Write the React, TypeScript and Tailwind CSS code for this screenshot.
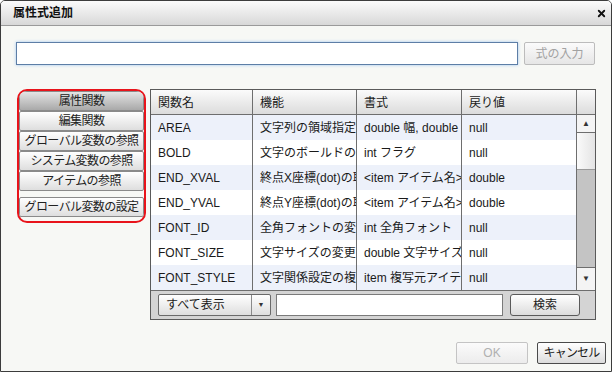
import { X } from "lucide-react";

const rows: [string, string, string, string][] = [
    ["AREA", "文字列の領域指定設定", "double 幅, double 高さ", "null"],
    ["BOLD", "文字のボールドの変更", "int フラグ", "null"],
    ["END_XVAL", "終点X座標(dot)の取得", "<item アイテム名>", "double"],
    ["END_YVAL", "終点Y座標(dot)の取得", "<item アイテム名>", "double"],
    ["FONT_ID", "全角フォントの変更", "int 全角フォント", "null"],
    ["FONT_SIZE", "文字サイズの変更", "double 文字サイズ", "null"],
    ["FONT_STYLE", "文字関係設定の複写", "item 複写元アイテム", "null"],
];

const sideButtons = ["編集関数", "グローバル変数の参照", "システム変数の参照", "アイテムの参照"];

const cellCls = "h-[25px] shrink-0 flex items-center pl-[7px] overflow-hidden whitespace-nowrap border-r border-[#6e6e6e]";
const colW = ["w-[102px]", "w-[104px]", "w-[105px]", "w-[115px]"];

const SideButton = ({ label, header }: { label: string; header?: boolean }) => (
    <div
        className={`h-[20px] flex items-center justify-center border border-[#8a8a8a] rounded-[2px] text-[12px] tracking-[-0.6px] text-[#222] whitespace-nowrap ${
            header ? "bg-gradient-to-b from-[#e4e4e4] to-[#a9a9a9]" : "bg-gradient-to-b from-[#ffffff] to-[#dedede]"
        }`}
    >
        {label}
    </div>
);

export default function App() {
    return (
        <div className="w-[612px] h-[372px] flex flex-col border border-[#3c3c3c] rounded-t-[5px] bg-[#f7f8f5] overflow-hidden font-['Liberation_Sans','Noto_Sans_CJK_JP',sans-serif] text-[#1a1a1a]">
            {/* title bar */}
            <div className="h-[25px] shrink-0 flex items-center justify-between pl-[12px] pr-[4px] bg-gradient-to-b from-[#fbfbfb] to-[#d8d8d8] border-b border-[#9a9a9a]">
                <span className="text-[12px] font-bold text-[#111]">属性式追加</span>
                <X size={11} strokeWidth={4} className="text-[#111]" />
            </div>

            <div className="flex-1 flex flex-col px-[15px] pt-[16px]">
                {/* formula input */}
                <div className="flex items-center gap-[6px]">
                    <div className="w-[502px] h-[23px] bg-white border border-[#5d7ea6] shadow-[0_0_3px_#9fc4ee]" />
                    <div className="w-[71px] h-[23px] flex items-center justify-center border border-[#bcbcbc] rounded-[2px] bg-gradient-to-b from-[#fbfbfb] to-[#e6e6e6] text-[12px] text-[#a2a2a2]">
                        式の入力
                    </div>
                </div>

                <div className="flex items-start gap-[4px] mt-[24px] pl-[1px]">
                    {/* left side menu */}
                    <div className="w-[130px] border-2 border-[#e8141b] rounded-[10px] overflow-hidden flex flex-col pb-[4px]">
                        <SideButton label="属性関数" header />
                        {sideButtons.map(b => <SideButton key={b} label={b} />)}
                        <div className="mt-[6px]">
                            <SideButton label="グローバル変数の設定" />
                        </div>
                    </div>

                    {/* function table */}
                    <div className="w-[446px] border border-[#5a5a5a] bg-[#d4d4d4]">
                        <div className="flex bg-white text-[12px]">
                            <div className="flex flex-col">
                                <div className="flex h-[25px] bg-gradient-to-b from-[#fbfbfb] to-[#dcdcdc] border-b border-[#6e6e6e]">
                                    {["関数名", "機能", "書式", "戻り値"].map((h, i) => (
                                        <div key={h} className={`${cellCls} ${colW[i]} h-[24px]`}>{h}</div>
                                    ))}
                                </div>
                                {rows.map((r, ri) => (
                                    <div key={r[0]} className={`flex ${ri % 2 === 0 ? "bg-[#edf1fa]" : "bg-white"}`}>
                                        {r.map((c, i) => (
                                            <div key={i} className={`${cellCls} ${colW[i]}`}>{c}</div>
                                        ))}
                                    </div>
                                ))}
                            </div>
                            {/* scrollbar */}
                            <div className="w-[18px] flex flex-col">
                                <div className="h-[25px] bg-gradient-to-b from-[#fbfbfb] to-[#dcdcdc] border-b border-[#6e6e6e]" />
                                <div className="h-[18px] flex items-center justify-center border-b border-[#6e6e6e] bg-[#f4f4f4] text-[8px] text-[#333]">▲</div>
                                <div className="h-[37px] bg-gradient-to-r from-[#fafafa] to-[#e4e4e4] border-b border-[#9a9a9a]" />
                                <div className="flex-1 bg-[#c4c4c4]" />
                                <div className="h-[23px] flex items-center justify-center border-t border-[#6e6e6e] bg-[#f4f4f4] text-[8px] text-[#333]">▼</div>
                            </div>
                        </div>

                        {/* toolbar */}
                        <div className="h-[29px] flex items-center border-t border-[#6e6e6e] pl-[7px] gap-[5px] text-[12px]">
                            <div className="w-[113px] h-[22px] flex border border-[#6a6a6a] rounded-[2px] bg-gradient-to-b from-[#ffffff] to-[#dedede]">
                                <div className="flex-1 flex items-center pl-[7px]">すべて表示</div>
                                <div className="w-[19px] flex items-center justify-center border-l border-[#8a8a8a] text-[7px] text-[#333]">▼</div>
                            </div>
                            <div className="w-[227px] h-[22px] bg-white border border-[#7a7a7a]" />
                            <div className="ml-[2px] w-[70px] h-[22px] flex items-center justify-center border border-[#5a5a5a] rounded-[3px] bg-gradient-to-b from-[#ffffff] to-[#dcdcdc]">
                                検索
                            </div>
                        </div>
                    </div>
                </div>

                {/* footer */}
                <div className="flex justify-end gap-[9px] mt-[22px] mr-[-10px]">
                    <div className="w-[72px] h-[22px] flex items-center justify-center border border-[#c4c4c4] rounded-[2px] bg-gradient-to-b from-[#fbfbfb] to-[#ececec] text-[12px] text-[#b0b0b0]">
                        OK
                    </div>
                    <div className="w-[69px] h-[22px] flex items-center justify-center border border-[#4a4a4a] rounded-[2px] bg-gradient-to-b from-[#ffffff] to-[#dcdcdc] text-[12px] tracking-[-0.8px] whitespace-nowrap">
                        キャンセル
                    </div>
                </div>
            </div>
        </div>
    );
}
